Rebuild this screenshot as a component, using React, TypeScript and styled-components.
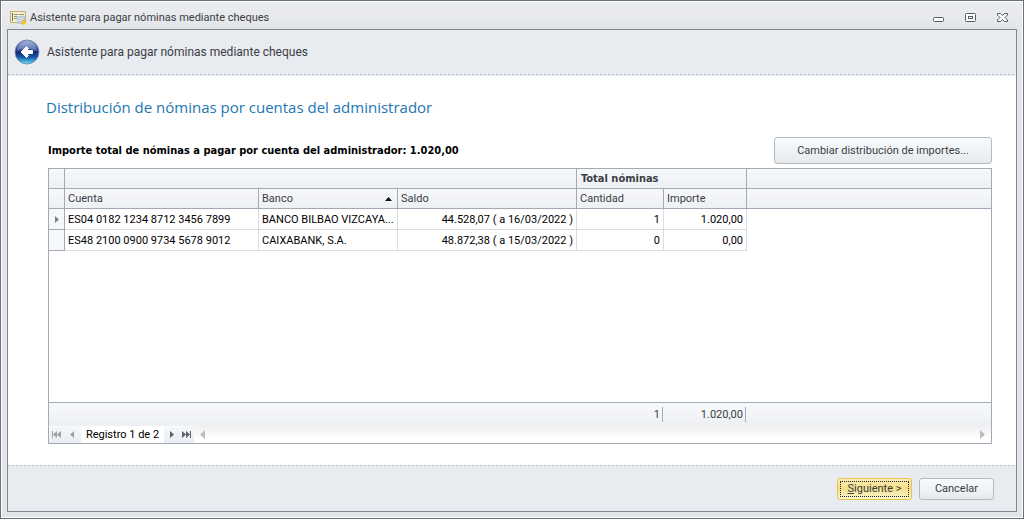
import React from "react";
import styled, { createGlobalStyle } from "styled-components";

const uiFont = `Roboto, Tahoma, sans-serif`;
const titleFont = `"Open Sans", "Segoe UI", sans-serif`;
const boldFont = `"DejaVu Sans Condensed", Tahoma, sans-serif`;
const line = "#a3aab6";
const softLine = "#d9dce0";
const dashes = "repeating-linear-gradient(90deg, #b4bbc6 0 2px, #f1f3f6 2px 4px)";
const headerFill = "linear-gradient(#f7f8fa, #edf0f4)";

const GlobalStyle = createGlobalStyle`
  *, *::before, *::after { box-sizing: border-box; }
  body { margin: 0; }
  button, input { font: inherit; color: inherit; }
`;

const Window = styled.div`
  min-height: 100vh;
  display: flex;
  flex-direction: column;
  padding: 0 6px 6px;
  border: 1px solid #6a6f7b;
  box-shadow: inset 0 0 0 1px #fff;
  background: linear-gradient(#ecedf1, #e2e5e8 30px);
  font-family: ${uiFont};
  font-size: 11px;
  line-height: 14px;
  color: #3a3d44;
`;

const TitleBar = styled.header`
  height: 28px;
  display: flex;
  align-items: center;
  gap: 4px;
  padding: 6px 8px 0 3px;
`;

const WindowTitle = styled.span`
  flex: 1;
`;

const WindowButtons = styled.div`
  display: flex;
  gap: 20px;
`;

const IconButton = styled.button`
  display: flex;
  align-items: center;
  justify-content: center;
  border: 0;
  padding: 0;
  background: none;
`;

const Frame = styled.div`
  flex: 1;
  display: flex;
  flex-direction: column;
  border: 1px solid #82868f;
  background: #fff;
`;

const WizardHeader = styled.div`
  height: 46px;
  display: flex;
  align-items: center;
  gap: 7px;
  padding: 0 6px 2px;
  background: ${dashes} left bottom 1px / 100% 1px no-repeat, #e8ebf0;
  font-size: 12px;
`;

const WizardName = styled.span``;

const Page = styled.main`
  flex: 1;
  display: flex;
  flex-direction: column;
  padding: 20px 24px 21px 40px;
`;

const PageTitle = styled.h1`
  margin: 0 0 19px -2px;
  font-family: ${titleFont};
  font-weight: 400;
  font-size: 15px;
  line-height: 22px;
  color: #1c77b3;
`;

const Toolbar = styled.div`
  display: flex;
  justify-content: space-between;
  align-items: center;
  margin-bottom: 4px;
`;

const TotalLabel = styled.strong`
  font-family: ${boldFont};
  color: #000;
`;

const PushButton = styled.button<{ $wide?: boolean; $primary?: boolean }>`
  width: ${(p) => (p.$wide ? 218 : 75)}px;
  height: ${(p) => (p.$wide ? 27 : 22)}px;
  padding: 0;
  border: 1px solid ${(p) => (p.$primary ? "#e9c34b" : "#b5b9c1")};
  border-radius: 3px;
  background: ${(p) =>
    p.$primary
      ? "linear-gradient(#fbeeb9, #f5df87 45%, #fdf6d0)"
      : "linear-gradient(#f8fbfd, #f0f3f6 50%, #e5e9ec)"};
  ${(p) => p.$primary && "outline: 1px dotted #222; outline-offset: -4px;"}
`;

const GridPanel = styled.section`
  flex: 1;
  display: flex;
  flex-direction: column;
  border: 1px solid ${line};
`;

const Table = styled.table`
  width: 100%;
  table-layout: fixed;
  border-spacing: 0;
  color: #000;
`;

const Col = styled.col<{ $w?: number }>`
  ${(p) => p.$w && `width: ${p.$w}px;`}
`;

const Head = styled.th<{ $bold?: boolean; $last?: boolean }>`
  height: 20px;
  padding: 0 3px;
  border: solid ${line};
  border-width: 0 ${(p) => (p.$last ? 0 : 1)}px 1px 0;
  background: ${headerFill};
  color: #3a3d44;
  font-weight: 400;
  text-align: left;
  ${(p) => p.$bold && `font-family: ${boldFont}; font-weight: 700; padding-left: 4px;`}
`;

const SortLabel = styled.span`
  display: flex;
  justify-content: space-between;
  align-items: center;
  padding-right: 2px;
`;

const Cell = styled.td<{ $right?: boolean }>`
  height: 21px;
  padding: 1px 3px 0;
  border: solid ${softLine};
  border-width: 0 1px 1px 0;
  text-align: ${(p) => (p.$right ? "right" : "left")};
  white-space: nowrap;
`;

const Indicator = styled.td`
  padding: 0;
  border: solid ${line};
  border-width: 0 1px 1px 0;
  background: #f5f7f9;
  svg { display: block; margin: 0 auto; }
`;

const Blank = styled.td``;

const Summary = styled.div`
  display: flex;
  height: 24px;
  margin-top: auto;
  padding: 4px 0 4px 528px;
  border-top: 1px solid ${line};
  background: ${headerFill};
`;

const SummaryCell = styled.output<{ $w: number }>`
  width: ${(p) => p.$w}px;
  padding: 1px 2px 0 0;
  border-right: 1px solid ${line};
  text-align: right;
`;

const Navigator = styled.nav`
  display: flex;
  height: 17px;
`;

const NavGroup = styled.div<{ $muted?: boolean }>`
  display: flex;
  align-items: center;
  justify-content: space-between;
  width: ${(p) => (p.$muted ? 32 : 30)}px;
  padding: ${(p) => (p.$muted ? "0 7px 0 3px" : "0 3px 0 6px")};
  color: ${(p) => (p.$muted ? "#9da1a7" : "#5d646d")};
  background: linear-gradient(#f6f8fa, #e9edf1);
`;

const RecordLabel = styled.span`
  width: 83px;
  padding: 2px 0 0;
  text-align: center;
  color: #000;
`;

const ScrollTrack = styled.div`
  flex: 1;
  display: flex;
  justify-content: space-between;
  align-items: center;
  padding: 0 6px;
  color: #bbbdc0;
  background: linear-gradient(#f0f0f0, #fff 80%);
`;

const WizardFooter = styled.footer`
  height: 46px;
  display: flex;
  justify-content: flex-end;
  align-items: center;
  gap: 7px;
  padding: 2px 22px 0;
  background: ${dashes} left top / 100% 1px no-repeat, #e8ebf0;
`;

type ArrowProps = { dir: "left" | "right"; bar?: boolean; big?: boolean };

function Arrow({ dir, bar, big }: ArrowProps) {
  const d = big ? "M5 0V9L0 4.5Z" : bar ? "M0 1H1V8H0ZM5 1V8L1 4.5ZM9 1V8L5 4.5Z" : "M4 1V8L0 4.5Z";
  const w = big ? 5 : bar ? 9 : 4;
  return (
    <svg width={w} height={9} viewBox={`0 0 ${w} 9`} fill="currentColor">
      <path d={d} transform={dir === "right" ? `translate(${w} 0) scale(-1 1)` : undefined} />
    </svg>
  );
}

function AppIcon() {
  return (
    <svg width="16" height="14" viewBox="0 0 16 14">
      <rect x="0.5" y="0.5" width="15" height="11" fill="#f7efd2" stroke="#c9ae73" />
      <path d="M2.5 2V10" stroke="#67794f" />
      <path d="M4 3.5H8M9 3.5H14M4 5.5H7M4 7.5H7" stroke="#8d9472" />
      <rect x="7" y="5" width="8" height="8" fill="#bccbdc" />
      <path d="M8 7.5H14M8 9.5H12" stroke="#d9e3ee" />
      <circle cx="13.5" cy="11.5" r="2.2" fill="#f5c21c" />
    </svg>
  );
}

function BackIcon() {
  return (
    <svg width="26" height="26" viewBox="0 0 26 26">
      <defs>
        <linearGradient id="ball" x1="0" y1="0" x2="0" y2="1">
          <stop offset="0" stopColor="#8da0cf" />
          <stop offset="0.3" stopColor="#4461a8" />
          <stop offset="0.5" stopColor="#12296f" />
          <stop offset="0.72" stopColor="#175aa8" />
          <stop offset="1" stopColor="#5fe9fb" />
        </linearGradient>
      </defs>
      <circle cx="13" cy="13" r="12" fill="url(#ball)" stroke="#7d8cb0" />
      <path d="M3 12A10 10 0 0 1 23 12Q13 7 3 12Z" fill="#fff" opacity="0.25" />
      <path
        d="M7 13L12.5 7.5L14.5 9.5L12.5 11.5H18.5V14.5H12.5L14.5 16.5L12.5 18.5Z"
        fill="#fff"
        stroke="#fff"
        strokeWidth="1"
        strokeLinejoin="round"
      />
    </svg>
  );
}

function RowMarker() {
  return (
    <svg width="4" height="7" viewBox="0 0 4 7">
      <path d="M0 0L4 3.5L0 7Z" fill="#7d828a" />
    </svg>
  );
}

const rows = [
  ["ES04 0182 1234 8712 3456 7899", "BANCO BILBAO VIZCAYA...", "44.528,07 ( a 16/03/2022 )", "1", "1.020,00"],
  ["ES48 2100 0900 9734 5678 9012", "CAIXABANK, S.A.", "48.872,38 ( a 15/03/2022 )", "0", "0,00"],
];

export default function App() {
  return (
    <Window>
      <GlobalStyle />
      <TitleBar>
        <AppIcon />
        <WindowTitle>Asistente para pagar nóminas mediante cheques</WindowTitle>
        <WindowButtons>
          <IconButton aria-label="Minimizar">
            <svg width="12" height="12" fill="none" stroke="#555a63">
              <rect x="0.5" y="5.5" width="10" height="4" rx="1" fill="#fff" />
            </svg>
          </IconButton>
          <IconButton aria-label="Maximizar">
            <svg width="12" height="12" fill="none" stroke="#555a63">
              <rect x="0.5" y="1.5" width="10" height="8" rx="1" fill="#fff" />
              <rect x="3.5" y="4.5" width="4" height="2" />
            </svg>
          </IconButton>
          <IconButton aria-label="Cerrar">
            <svg width="12" height="12" fill="none" stroke="#555a63">
              <path d="M0.5 1.5H3.5L5.5 3.5L7.5 1.5H10.5V3L8 5.5L10.5 8V9.5H7.5L5.5 7.5L3.5 9.5H0.5V8L3 5.5L0.5 3Z" fill="#fff" />
            </svg>
          </IconButton>
        </WindowButtons>
      </TitleBar>
      <Frame>
        <WizardHeader>
          <IconButton aria-label="Atrás">
            <BackIcon />
          </IconButton>
          <WizardName>Asistente para pagar nóminas mediante cheques</WizardName>
        </WizardHeader>
        <Page>
          <PageTitle>Distribución de nóminas por cuentas del administrador</PageTitle>
          <Toolbar>
            <TotalLabel>Importe total de nóminas a pagar por cuenta del administrador: 1.020,00</TotalLabel>
            <PushButton $wide>Cambiar distribución de importes...</PushButton>
          </Toolbar>
          <GridPanel>
            <Table>
              <colgroup>
                <Col $w={16} />
                <Col $w={194} />
                <Col $w={139} />
                <Col $w={179} />
                <Col $w={87} />
                <Col $w={83} />
                <Col />
              </colgroup>
              <thead>
                <tr>
                  <Head />
                  <Head colSpan={3} />
                  <Head colSpan={2} $bold>Total nóminas</Head>
                  <Head $last />
                </tr>
                <tr>
                  <Head />
                  <Head>Cuenta</Head>
                  <Head aria-sort="ascending">
                    <SortLabel>
                      Banco
                      <svg width="7" height="4" viewBox="0 0 7 4">
                        <path d="M3.5 0L7 4H0Z" fill="#111" />
                      </svg>
                    </SortLabel>
                  </Head>
                  <Head>Saldo</Head>
                  <Head>Cantidad</Head>
                  <Head>Importe</Head>
                  <Head $last />
                </tr>
              </thead>
              <tbody>
                {rows.map((row, i) => (
                  <tr key={row[0]}>
                    <Indicator>{i === 0 && <RowMarker />}</Indicator>
                    {row.map((text, c) => (
                      <Cell key={c} $right={c > 1}>{text}</Cell>
                    ))}
                    <Blank />
                  </tr>
                ))}
              </tbody>
            </Table>
            <Summary>
              <SummaryCell $w={86}>1</SummaryCell>
              <SummaryCell $w={83}>1.020,00</SummaryCell>
            </Summary>
            <Navigator aria-label="Registros">
              <NavGroup $muted>
                <IconButton aria-label="Primero"><Arrow dir="left" bar /></IconButton>
                <IconButton aria-label="Anterior"><Arrow dir="left" /></IconButton>
              </NavGroup>
              <RecordLabel>Registro 1 de 2</RecordLabel>
              <NavGroup>
                <IconButton aria-label="Siguiente"><Arrow dir="right" /></IconButton>
                <IconButton aria-label="Último"><Arrow dir="right" bar /></IconButton>
              </NavGroup>
              <ScrollTrack>
                <Arrow dir="left" big />
                <Arrow dir="right" big />
              </ScrollTrack>
            </Navigator>
          </GridPanel>
        </Page>
        <WizardFooter>
          <PushButton $primary><u>S</u>iguiente &gt;</PushButton>
          <PushButton>Cancelar</PushButton>
        </WizardFooter>
      </Frame>
    </Window>
  );
}
